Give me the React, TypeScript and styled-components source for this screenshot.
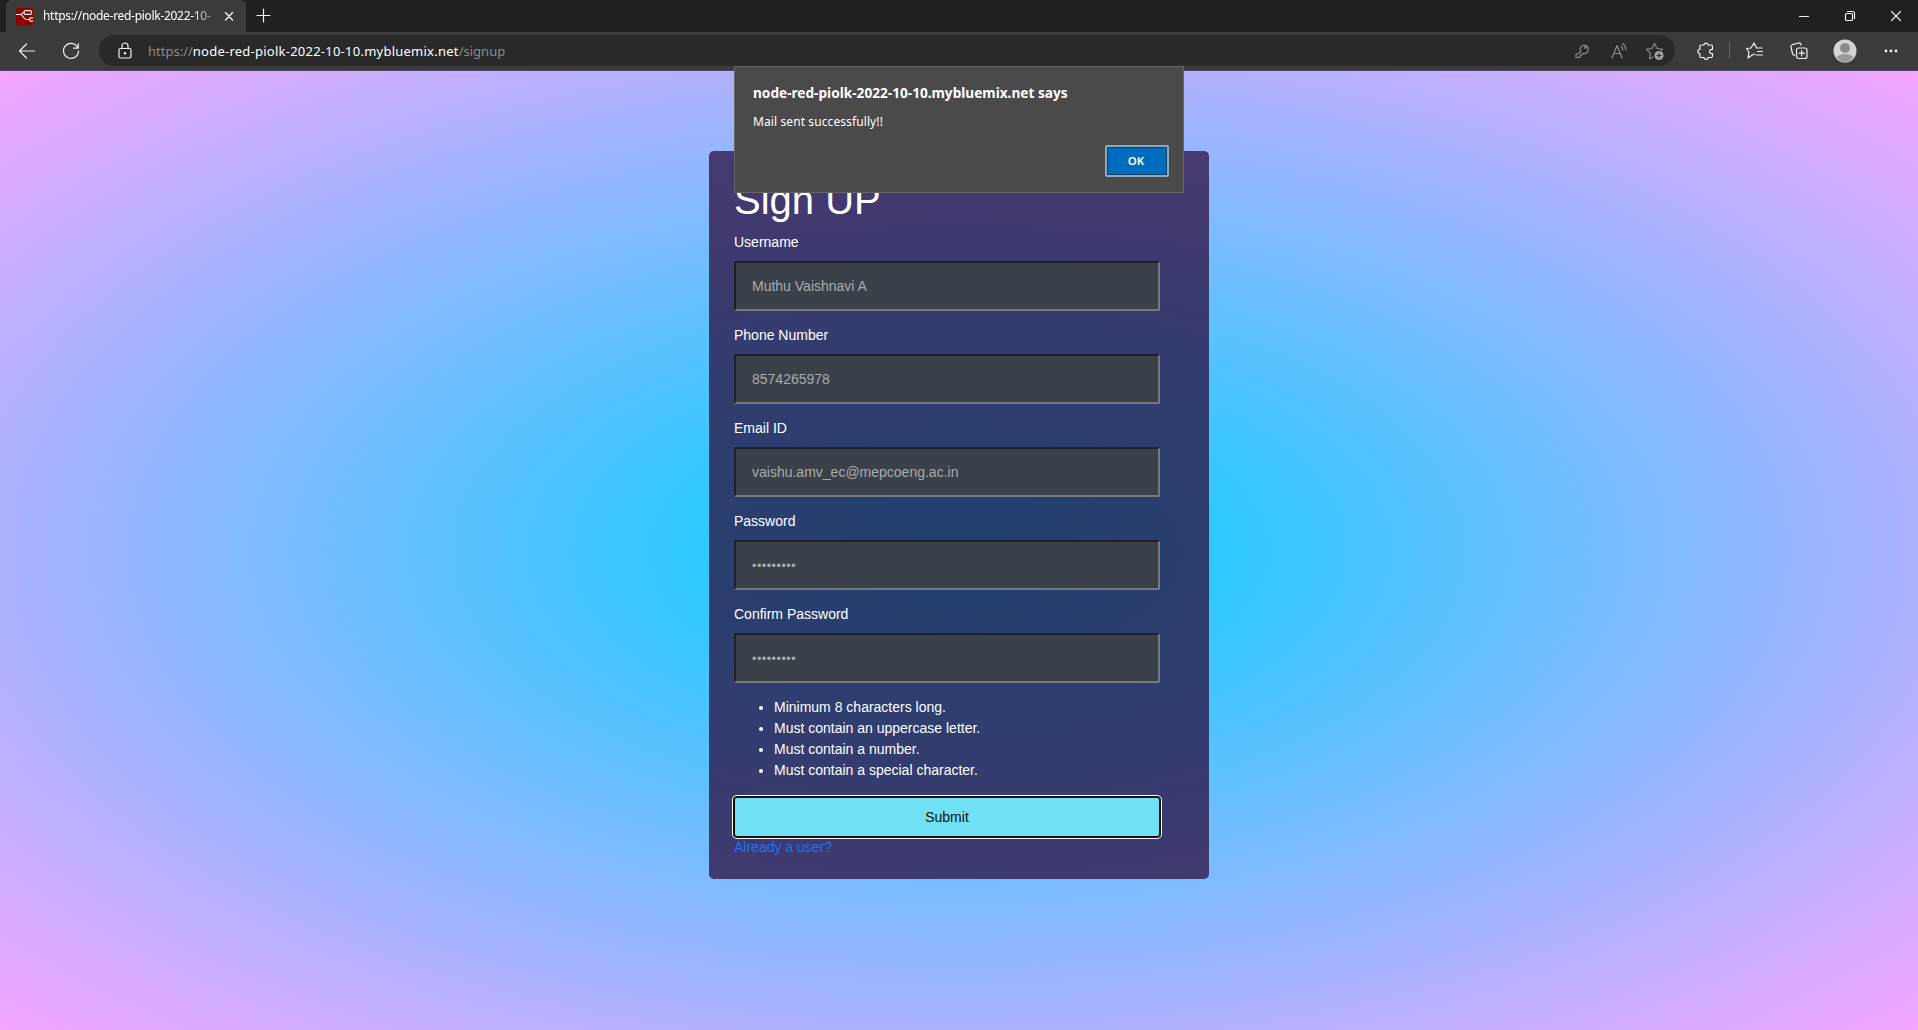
import React from "react";
import styled, { createGlobalStyle } from "styled-components";

const Global = createGlobalStyle`
  * { box-sizing: border-box; }
  html, body { margin: 0; height: 100%; overflow: hidden; background: #3b3b3b; }
  #root { height: 100%; }
`;

const ui = `"Noto Sans", "Open Sans", sans-serif`;
const page = `"Liberation Sans", Arial, sans-serif`;

const Window = styled.div`
  position: relative;
  display: flex;
  flex-direction: column;
  width: 1918px;
  height: 1030px;
  font-family: ${ui};
  color: #fff;
`;
const TabBar = styled.header`
  display: flex;
  height: 32px;
  padding-left: 6px;
  background: #202020;
`;
const Tab = styled.div`
  display: flex;
  align-items: center;
  width: 240px;
  padding: 0 8px 0 10px;
  background: #3b3b3b;
  border-radius: 6px 6px 0 0;
`;
const TabTitle = styled.span`
  width: 176px;
  margin: 0 3px 0 10px;
  white-space: nowrap;
  font-size: 12px;
  letter-spacing: -0.3px;
  line-height: 18px;
  mask-image: linear-gradient(90deg, #000 150px, transparent 180px);
`;
const Icon = styled.svg<{ $size?: number; $color?: string; $gap?: number }>`
  display: block;
  flex: none;
  width: ${(p) => p.$size ?? 20}px;
  height: ${(p) => p.$size ?? 20}px;
  margin-left: ${(p) => p.$gap ?? 0}px;
  fill: none;
  stroke: ${(p) => p.$color ?? "#f0f0f0"};
  stroke-width: 1.2;
  stroke-linecap: round;
  stroke-linejoin: round;
`;
const NewTab = styled.div`
  display: grid;
  place-items: center;
  width: 35px;
`;
const WindowControls = styled.div`
  display: flex;
  align-items: center;
  gap: 26px;
  margin-left: auto;
  padding-right: 12px;
`;
const Toolbar = styled.div`
  display: flex;
  align-items: center;
  height: 39px;
  padding: 0 17px 1px 17px;
  background: #3b3b3b;
  border-bottom: 1px solid #4c4460;
`;
const Address = styled.div`
  display: flex;
  align-items: center;
  width: 1578px;
  height: 31px;
  margin-left: 18px;
  padding: 0 10px 0 16px;
  border-radius: 16px;
  background: #292929;
`;
const Url = styled.span`
  margin-left: 13px;
  font-size: 13px;
  line-height: 20px;
  color: #8c8c8c;
  white-space: pre;
  b { font-weight: 400; color: #fff; letter-spacing: 0.24px; }
`;
const AddressActions = styled.div`
  display: flex;
  gap: 16px;
  margin-left: auto;
`;
const Divider = styled.div`
  width: 1px;
  height: 17px;
  margin: 0 15px 0 13px;
  background: #666;
`;
const Tools = styled.div`
  display: flex;
  align-items: center;
  gap: 24px;
`;
const Page = styled.main`
  flex: 1;
  padding-top: 80px;
  background: radial-gradient(ellipse farthest-corner, #00d2ff, #f5a5ff);
  font-family: ${page};
  font-size: 14px;
`;
const Card = styled.form`
  width: 500px;
  height: 728px;
  margin: 0 auto;
  padding: 25px;
  border-radius: 5px;
  background: rgba(42, 9, 58, 0.73);
`;
const Title = styled.h1`
  margin: 0 0 8px;
  font-size: 40px;
  font-weight: 400;
  line-height: 48px;
`;
const Field = styled.label`
  display: block;
  height: 93px;
  line-height: 21px;
`;
const Input = styled.input<{ $masked?: boolean }>`
  display: block;
  width: 426px;
  height: 50px;
  margin-top: 8px;
  padding: ${(p) => (p.$masked ? 1 : 0)}px 16px 0;
  border: 2px solid;
  border-color: #1d202c #767a7e #767a7e #1d202c;
  border-radius: 2px;
  outline: 0;
  background: #3b4148;
  color: #a9abad;
  font: ${(p) => (p.$masked ? 12.5 : 14)}px ${page};
  letter-spacing: ${(p) => (p.$masked ? 0.53 : 0)}px;
`;
const Rules = styled.ul`
  margin: 0 0 16px;
  padding-left: 40px;
  line-height: 21px;
`;
const Submit = styled.button`
  display: block;
  width: 426px;
  height: 40px;
  padding: 0;
  border: 0;
  border-radius: 3px;
  background: #70e1f5;
  color: #111;
  font: 14px ${page};
  box-shadow: inset 0 0 0 1px #101010, 0 0 0 1px #101010, 0 0 0 2px #fff;
`;
const Link = styled.a`
  color: #1a73f5;
  line-height: 21px;
`;
const Dialog = styled.section`
  position: absolute;
  top: 66px;
  left: 734px;
  display: flex;
  flex-direction: column;
  width: 450px;
  height: 127px;
  padding: 16px 14px 0 18px;
  border: 1px solid #666;
  background: #4a4a4a;
`;
const DialogHost = styled.strong`
  font-size: 13.65px;
  line-height: 20px;
`;
const DialogText = styled.span`
  margin-top: 9px;
  font-size: 12px;
  letter-spacing: 0.1px;
  line-height: 20px;
`;
const OkButton = styled.button`
  align-self: flex-end;
  width: 64px;
  height: 32px;
  margin-top: 13px;
  padding: 0 2px 1px 0;
  border: 2px solid #8fa9c0;
  border-radius: 2px;
  background: #006cbe;
  box-shadow: inset 0 0 0 1px #10406c;
  color: #fff;
  font: 600 11.5px ${ui};
`;

const fields = [
  { label: "Username", value: "Muthu Vaishnavi A" },
  { label: "Phone Number", value: "8574265978" },
  { label: "Email ID", value: "vaishu.amv_ec@mepcoeng.ac.in" },
  { label: "Password", value: "•••••••••", masked: true },
  { label: "Confirm Password", value: "•••••••••", masked: true },
];
const rules = [
  "Minimum 8 characters long.",
  "Must contain an uppercase letter.",
  "Must contain a number.",
  "Must contain a special character.",
];

export default function App() {
  return (
    <Window>
      <Global />
      <TabBar>
        <Tab>
          <Icon $size={17} viewBox="0 0 17 17">
            <rect width="17" height="17" rx="1.5" fill="#8f0000" stroke="none" />
            <path d="M0 6.500h4c3.500 0 3 5 6.500 5h3M4 6.500c2.500 0 2-2 4-2" />
            <rect x="8" y="2.700" width="7.500" height="3.600" rx="1.300" />
            <path d="M17 9.800h-2q-1.500 0-1.500 1.700t1.500 1.700h2" />
          </Icon>
          <TabTitle>https://node-red-piolk-2022-10-</TabTitle>
          <Icon $size={18} viewBox="0 0 18 18"><path d="m5.500 5.500 7 7.500m0-7.500-7 7.500" strokeWidth="1.4" /></Icon>
        </Tab>
        <NewTab><Icon $size={16} viewBox="0 0 16 16"><path d="M7.500 1v13M1 7.500h13" /></Icon></NewTab>
        <WindowControls>
          <Icon viewBox="0 0 20 20"><path d="M5.500 10.500h9" /></Icon>
          <Icon viewBox="0 0 20 20"><rect x="5.500" y="7.500" width="7" height="7" rx="1.300" /><path d="M7.500 5.500h5q2 0 2 2v5" /></Icon>
          <Icon viewBox="0 0 20 20"><path d="m5.500 5.500 9 9m0-9-9 9" /></Icon>
        </WindowControls>
      </TabBar>
      <Toolbar>
        <Icon viewBox="0 0 20 20"><path d="M17.500 10H2.500m7-7-7 7 7 7" /></Icon>
        <Icon $gap={24} viewBox="0 0 20 20"><path d="M17 7.200A7.500 7.500 0 1 0 17.500 10M17.300 2.500v4.700h-4.700" /></Icon>
        <Address>
          <Icon viewBox="0 0 20 20">
            <rect x="4" y="7.500" width="12" height="9.500" rx="1.500" />
            <path d="M7 7.500V5a3 3 0 0 1 6 0v2.500" />
            <circle cx="10" cy="12.200" r=".6" fill="#fff" />
          </Icon>
          <Url>https://<b>node-red-piolk-2022-10-10.mybluemix.net</b>/signup</Url>
          <AddressActions>
            <Icon $color="#8b8b8b" viewBox="0 0 20 20">
              <path d="M9 11.500A4.200 4.200 0 1 1 11.500 13l-1 1H9v1.500H7.500V17H4v-3z" transform="translate(-1 -.5)" />
              <circle cx="12.500" cy="6.500" r=".8" />
            </Icon>
            <Icon $color="#8b8b8b" viewBox="0 0 20 20"><path d="m3 17 5-12.500L13 17M4.800 12.500h6.400M12 5q2 1.300 1.800 4M13.500 2.500q3.500 2.200 3.300 6.500" /></Icon>
            <Icon $color="#8b8b8b" viewBox="0 0 20 20">
              <path d="M8 16l-3.500 2 .8-5.800L1.500 8.300l5.400-.8L9.500 2.500 12 7.500l5.500.8-1 1" />
              <circle cx="14" cy="14.500" r="4.500" fill="#a5a5a5" stroke="none" />
              <path d="M14 12.500v4M12 14.500h4" stroke="#292929" />
            </Icon>
          </AddressActions>
        </Address>
        <Icon $gap={21} viewBox="0 0 20 20">
          <path d="M5 4h3a2 1.900 0 0 1 4 0h3q1.500 0 1.500 1.500V8.500q-3-.5-3 2t3 2V15q0 1.500-1.500 1.500h-3a2 1.900 0 0 1-4 0H5Q3.800 16.500 3.800 15v-2.600a2 2 0 0 1 0-4V5.500Q3.800 4 5 4z" />
        </Icon>
        <Divider />
        <Tools>
          <Icon viewBox="0 0 20 20"><path d="M6.500 14.500 3 17l1-6L1.500 7.500 6 7l3-5 2.500 5H17M12.500 10.500H17.500M11 14h6.500M6.500 14.500l3-1.500" /></Icon>
          <Icon viewBox="0 0 20 20"><rect x="7.500" y="7" width="10.500" height="10.500" rx="2" /><path d="M12.700 9.500v5.500M10 12.200h5.500M5.500 14.500q-1.500-.5-2-2L2 6q-.3-1.800 1.300-2.300L9.500 2q2-.4 2.700 2" /></Icon>
          <Icon $size={24} viewBox="0 0 24 24"><circle cx="12" cy="12" r="11.500" fill="#d4d4d4" stroke="none" /><circle cx="12" cy="9" r="5" fill="#8a8a8a" stroke="none" /><path d="M3.500 18q3.500-3 8.500-3t8.500 3q-3 5-8.500 5t-8.500-5z" fill="#9a9a9a" stroke="none" /></Icon>
          <Icon viewBox="0 0 20 20"><g fill="#f0f0f0" stroke="none"><circle cx="5" cy="10" r="1.400" /><circle cx="10" cy="10" r="1.400" /><circle cx="15" cy="10" r="1.400" /></g></Icon>
        </Tools>
      </Toolbar>
      <Page>
        <Card>
          <Title>Sign UP</Title>
          {fields.map((f) => (
            <Field key={f.label}>
              {f.label}
              <Input $masked={f.masked} value={f.value} readOnly />
            </Field>
          ))}
          <Rules>{rules.map((r) => <li key={r}>{r}</li>)}</Rules>
          <Submit type="button">Submit</Submit>
          <Link>Already a user?</Link>
        </Card>
      </Page>
      <Dialog>
        <DialogHost>node-red-piolk-2022-10-10.mybluemix.net says</DialogHost>
        <DialogText>Mail sent successfully!!</DialogText>
        <OkButton>OK</OkButton>
      </Dialog>
    </Window>
  );
}
